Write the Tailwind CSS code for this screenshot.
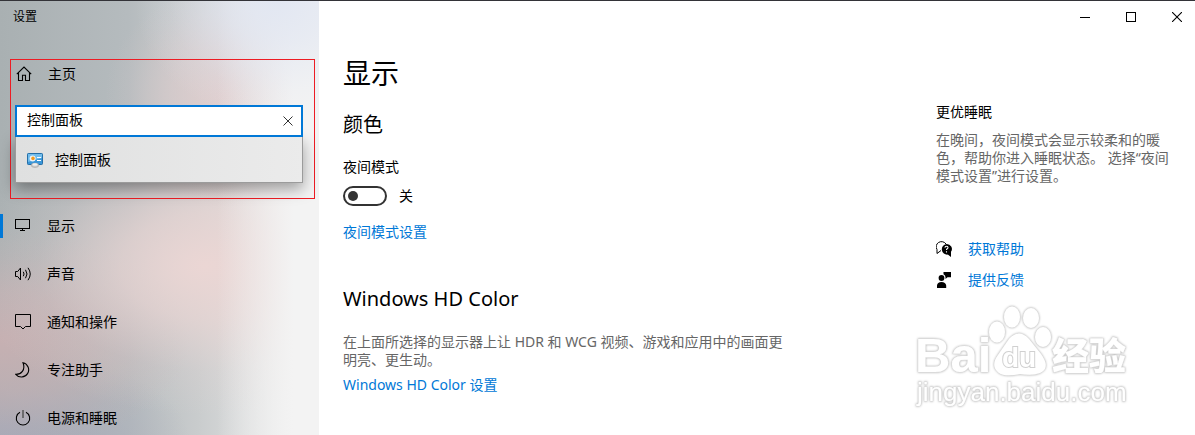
<!DOCTYPE html>
<html lang="zh-CN">
<head>
    <meta charset="UTF-8">
    <meta name="viewport" content="width=device-width, initial-scale=1.0">
    <title>设置</title>
    <script src="https://cdn.jsdelivr.net/npm/@tailwindcss/browser@4"></script>
</head>
<body class="font-['Noto_Sans','Noto_Sans_CJK_SC',sans-serif] text-sm leading-5 text-black bg-white">
    <div class="relative flex min-h-screen overflow-hidden border-t border-[#333338]">

        <!-- Sidebar -->
        <aside class="w-[319px] shrink-0 bg-[radial-gradient(ellipse_140px_120px_at_275px_0px,#e2e7f2_0%,#e2e7f2b0_35%,#e2e7f230_75%,#e2e7f200_100%),linear-gradient(to_right,#f3f3f300_68%,#f3f3f3_92%),radial-gradient(ellipse_120px_110px_at_225px_95px,#e3cdcdd0_0%,#e3cdcd80_45%,#e3cdcd20_80%,#e3cdcd00_100%),radial-gradient(ellipse_240px_150px_at_205px_265px,#ebd6d4_0%,#ebd6d4b0_35%,#ebd6d430_70%,#ebd6d400_100%),radial-gradient(ellipse_190px_110px_at_0px_340px,#c6b0b2_0%,#c6b0b2a0_45%,#c6b0b230_78%,#c6b0b200_100%),radial-gradient(ellipse_190px_90px_at_0px_440px,#a6a9b8_0%,#a6a9b890_50%,#a6a9b800_100%),linear-gradient(to_right,#a9b0b2_0%,#b5bbbe_40%,#c9cccd_62%,#e2e3e3_85%,#f2f2f2_100%)]">
            <div class="flex h-8 items-center pl-[13px] text-xs">设置</div>

            <!-- Home + search -->
            <div class="ml-[10px] mr-1 mt-[26px] border border-[#ed1c24] pb-[15px] pl-1 pr-[11px]">
                <a href="#" class="flex h-7 items-center gap-4 pl-px">
                    <svg class="size-4" viewBox="0 0 16 16" fill="none" stroke="currentColor" stroke-width="1.1">
                        <path d="M.8 8.2 8 1l7.2 7.2M2.5 6.8v7.7h4V9.2h3v5.3h4V6.8"/>
                    </svg>
                    主页
                </a>
                <div class="relative mt-[17px]">
                    <input id="search" type="text" aria-label="查找设置" value="控制面板" class="block h-8 w-full border-2 border-[#0078d7] bg-white pb-1 pl-[10px] pr-8 outline-none">
                    <button type="button" aria-label="清除" class="absolute right-[7px] top-2 flex size-4 items-center justify-center">
                        <svg class="size-[10px]" viewBox="0 0 10 10" fill="none" stroke="#333"><path d="m.5.5 9 9m0-9-9 9"/></svg>
                    </button>
                </div>
                <a href="#" class="flex h-[46px] items-center gap-3 border border-t-0 border-[#9b9b9b] bg-linear-to-r from-[#dfe0e0] to-[#ebebeb] pl-[11px] shadow-[0_6px_14px_rgba(0,0,0,0.35)]">
                    <svg class="size-4" viewBox="0 0 16 16">
                        <rect x=".5" y="1.5" width="15" height="11" rx=".8" fill="#3a96d8" stroke="#256fa8"/>
                        <path d="M1 2h14v4L1 10z" fill="#72bdec"/>
                        <circle cx="5.6" cy="6.6" r="3" fill="#f0f6fa"/>
                        <circle cx="6" cy="6.4" r="1.8" fill="#f29a1f"/>
                        <path d="M10 5.5h4M10 8.5h4" stroke="#fff" stroke-width="1.2"/>
                        <ellipse cx="8" cy="13.3" rx="3.8" ry="2.2" fill="#c9c9c9" stroke="#9b9b9b" stroke-width=".5"/>
                        <ellipse cx="8" cy="12.5" rx="2.6" ry="1.2" fill="#efefef"/>
                    </svg>
                    控制面板
                </a>
            </div>

            <!-- Categories -->
            <nav class="mt-[3px]">
                <a href="#" class="flex h-12 items-center">
                    <span class="h-6 w-[3px] bg-[#0078d7]"></span>
                    <svg class="ml-3 mr-4 size-4" viewBox="0 0 16 16" fill="none" stroke="currentColor" shape-rendering="crispEdges">
                        <path d="M.5 1.5h14v9H.5zM7.5 10.5v2M5 12.5h5"/>
                    </svg>
                    显示
                </a>
                <a href="#" class="flex h-12 items-center pl-[15px]">
                    <svg class="mr-4 size-4 overflow-visible" viewBox="0 0 16 16" fill="none" stroke="currentColor">
                        <path d="M.5 5.5h2.2L5.5 2v12l-2.8-3.5H.5z"/>
                        <path d="M8.3 5.8q1.5 2.2 0 4.4M10.5 3.8q3 4.2 0 8.4M13 1.8q4.500 6.200 0 12.400"/>
                    </svg>
                    声音
                </a>
                <a href="#" class="flex h-12 items-center pl-[15px]">
                    <svg class="mr-4 size-4 overflow-visible" viewBox="0 0 16 16" fill="none" stroke="currentColor">
                        <path d="M.5.5h15v12h-5L8 15l-2.5-2.500h-5z"/>
                    </svg>
                    通知和操作
                </a>
                <a href="#" class="flex h-12 items-center pl-[15px]">
                    <svg class="mr-4 size-4" viewBox="0 0 16 16" fill="none" stroke="currentColor" stroke-width="1.1">
                        <path d="M8 .8a7.200 7.200 0 1 1-7.200 11.500C6 12.500 10.800 8 8 .8z"/>
                    </svg>
                    专注助手
                </a>
                <a href="#" class="flex h-12 items-center pl-[15px]">
                    <svg class="mr-4 size-4" viewBox="0 0 16 16" fill="none" stroke="currentColor" stroke-width="1.1">
                        <path d="M5 2.300a6.700 6.700 0 1 0 6 0"/><path d="M8 0v8" stroke="#555" stroke-width="1.5"/>
                    </svg>
                    电源和睡眠
                </a>
            </nav>
        </aside>

        <div class="flex min-w-0 flex-1 flex-col">
            <!-- Window controls -->
            <div class="flex h-8 justify-end gap-[10px]">
                <button type="button" aria-label="最小化" class="flex w-9 items-center justify-center">
                    <svg class="size-[10px]" viewBox="0 0 10 10" stroke="#000" shape-rendering="crispEdges"><path d="M0 5.5h10"/></svg>
                </button>
                <button type="button" aria-label="最大化" class="flex w-9 items-center justify-center">
                    <svg class="size-[10px]" viewBox="0 0 10 10" fill="none" stroke="#000" shape-rendering="crispEdges"><path d="M.5.5h9v9h-9z"/></svg>
                </button>
                <button type="button" aria-label="关闭" class="flex w-9 items-center justify-center">
                    <svg class="size-[10px]" viewBox="0 0 10 10" fill="none" stroke="#000" stroke-width="1.1"><path d="m0 0 10 10m0-10L0 10"/></svg>
                </button>
            </div>

            <div class="flex flex-1">
                <main class="min-w-0 flex-1 pl-6 pt-[22px]">
                    <h1 class="text-[28px] leading-9">显示</h1>
                    <h2 class="mt-5 text-xl leading-7">颜色</h2>
                    <label for="night-light" class="mt-[18px] block">夜间模式</label>
                    <div class="mt-[9px] flex h-5 items-center gap-3">
                        <input id="night-light" type="checkbox" role="switch" class="flex h-5 w-11 appearance-none items-center rounded-full border-2 border-[#333] pl-[3px] before:size-[10px] before:rounded-full before:bg-[#333]">
                        <span>关</span>
                    </div>
                    <a href="#" class="mt-4 block text-[#0078d7]">夜间模式设置</a>

                    <h2 class="mt-[43px] text-xl leading-7">Windows HD Color</h2>
                    <p class="mt-5 max-w-[448px] leading-[18px] text-[#666]">在上面所选择的显示器上让 HDR 和 WCG 视频、游戏和应用中的画面更明亮、更生动。</p>
                    <a href="#" class="mt-[6px] block text-[#0078d7]">Windows HD Color 设置</a>
                </main>

                <!-- Related info -->
                <aside class="w-[259px] shrink-0 pr-5 pt-[69px]">
                    <h3>更优睡眠</h3>
                    <p class="mt-[9px] leading-[18px] text-[#666]">在晚间，夜间模式会显示较柔和的暖色，帮助你进入睡眠状态。 选择“夜间模式设置”进行设置。</p>
                    <a href="#" class="mt-[54px] flex items-center gap-4 text-[#0078d7]">
                        <svg class="size-4" viewBox="0 0 16 16">
                            <path d="M5 9.5 1 12.5V8.5A5 4.8 0 1 1 10 3" fill="none" stroke="#000"/>
                            <path d="M10.5 3a5.2 5 0 0 1 4.5 7.8V16l-3.2-2.4A5.2 5.2 0 1 1 10.5 3z" fill="#000"/>
                            <path d="M8.9 6.6q.1-1.4 1.6-1.4t1.5 1.3q0 .8-.8 1.3t-.7 1.2M10.5 10.2v1.2" fill="none" stroke="#fff" stroke-width="1.1"/>
                        </svg>
                        获取帮助
                    </a>
                    <a href="#" class="mt-[11px] flex items-center gap-4 text-[#0078d7]">
                        <svg class="size-4" viewBox="0 0 16 16">
                            <circle cx="5.5" cy="6" r="2.9"/>
                            <path d="M1 16v-2.5Q1.3 10 5.5 10t4.7 3.5V16zM7.5 0H15v5.2h-3.5L9.5 7V5.2Q9.5 3 7.5 2.2z"/>
                        </svg>
                        提供反馈
                    </a>
                </aside>
            </div>
        </div>

        <!-- Watermark -->
        <svg class="pointer-events-none absolute bottom-8 right-[60px] h-[108px] w-[224px] drop-shadow-[0_0_1px_rgba(0,0,0,0.3)]" viewBox="0 0 224 108" fill="#fff" stroke="#dcdcdc" paint-order="stroke" font-family="'Liberation Sans','Noto Sans CJK SC',sans-serif">
            <text x="4" y="70" font-size="49" font-weight="700">Bai</text>
            <ellipse cx="86" cy="30" rx="8" ry="10.5"/>
            <ellipse cx="101" cy="15" rx="8" ry="10.5"/>
            <ellipse cx="120" cy="16" rx="8" ry="10"/>
            <ellipse cx="132" cy="35" rx="8" ry="10"/>
            <path d="M98 37q10-11 20 0l12 15q10 14-1 19-7 3-20 1-15 3-21-1-9-7-1-18z"/>
            <text x="91" y="65" font-size="28" font-weight="700" stroke="#d0d0d0" stroke-width="2">du</text>
            <text x="141" y="68" font-size="37" font-weight="900">经验</text>
            <text x="6" y="99" font-size="26">jingyan.baidu.com</text>
        </svg>
    </div>
</body>
</html>
